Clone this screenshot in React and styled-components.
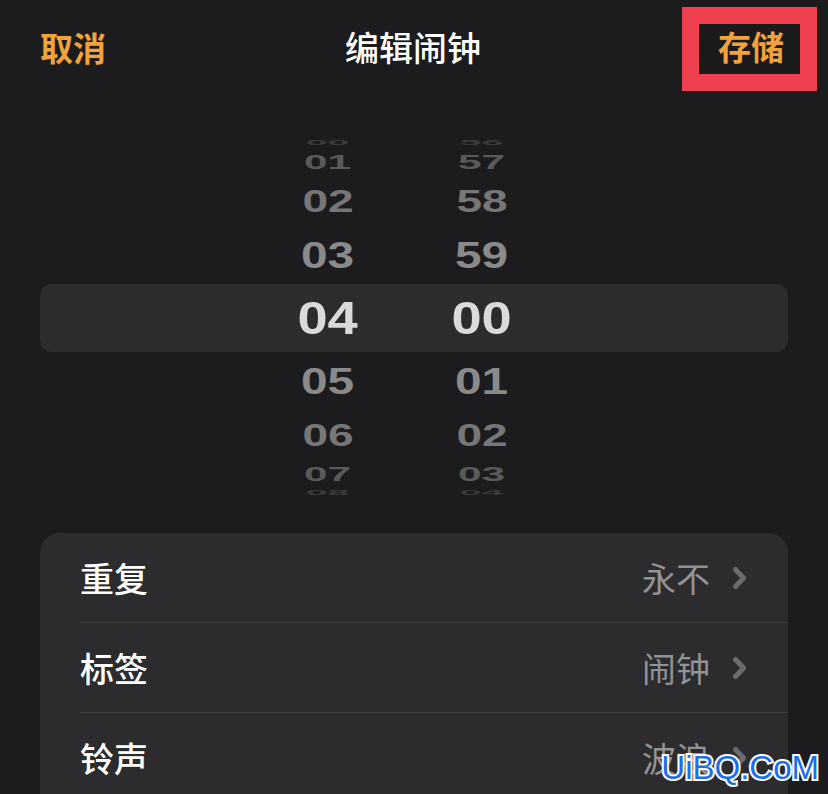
import styled, { createGlobalStyle } from "styled-components";

const GlobalStyle = createGlobalStyle`
    body {
        margin: 0;
        background: #1c1c1e;
        font-family: "Noto Sans CJK SC", "Noto Sans", sans-serif;
    }
`;

const Screen = styled.div`
    position: relative;
    height: 794px;
    overflow: hidden;
    background: #1c1c1e;
`;

const Header = styled.header`
    display: grid;
    grid-template-columns: 1fr auto 1fr;
    align-items: center;
    height: 98px;
    padding: 0 11px 0 40px;
`;

const NavText = styled.div`
    font-size: 33px;
    line-height: 40px;
    font-weight: 700;
    color: #f1a23a;
    padding-bottom: 5px;
`;

const Title = styled.h1`
    margin: 0 31px 0 0;
    font-size: 34px;
    line-height: 40px;
    font-weight: 500;
    color: #ffffff;
    padding-bottom: 5px;
`;

const SaveButton = styled.button`
    justify-self: end;
    box-sizing: border-box;
    width: 135px;
    height: 84px;
    border: 17px solid #f0404f;
    background: #1a1a1a;
    padding: 0 0 6px 3px;
    font-family: inherit;
    font-size: 33px;
    line-height: 40px;
    font-weight: 700;
    color: #f1a23a;
`;

const Picker = styled.section`
    display: grid;
    margin: 42px 40px 0;
`;

const Band = styled.div`
    grid-area: 1 / 1;
    align-self: center;
    height: 68px;
    border-radius: 12px;
    background: #2c2c2f;
`;

const Columns = styled.div`
    grid-area: 1 / 1;
    display: flex;
    gap: 54px;
    padding-left: 238px;
`;

const Wheel = styled.div`
    width: 100px;
    display: flex;
    flex-direction: column;
`;

const Slot = styled.div`
    height: ${(p) => p.$h}px;
    display: flex;
    align-items: center;
    justify-content: center;
    overflow: hidden;
`;

const Digit = styled.span`
    font-family: "Liberation Sans", Arial, sans-serif;
    font-size: 46px;
    line-height: 46px;
    font-weight: 700;
    color: ${(p) => p.$color};
    transform: scale(${(p) => p.$sx}, ${(p) => p.$sy});
`;

const Card = styled.section`
    margin: 37px 40px 0;
    border-radius: 20px;
    background: #2c2c2e;
    overflow: hidden;
`;

const Row = styled.div`
    display: flex;
    align-items: center;
    height: 89px;
    margin-left: 40px;
    padding-right: 41px;
    border-top: ${(p) => (p.$first ? "none" : "1px solid #3e3e41")};
`;

const Label = styled.span`
    flex: 1;
    font-size: 34px;
    font-weight: 500;
    color: #ffffff;
`;

const Value = styled.span`
    font-size: 34px;
    color: #929297;
    margin-right: 22px;
`;

const Watermark = styled.div`
    position: absolute;
    right: 9px;
    bottom: 10px;
    font-family: "Liberation Sans", Arial, sans-serif;
    font-size: 33px;
    line-height: 1;
    color: #1c6fe6;
    -webkit-text-stroke: 4px #ffffff;
    paint-order: stroke fill;
`;

const STEPS = [
    { h: 64, sx: 1.18, sy: 1, color: "#dadada" },
    { h: 62, sx: 1.04, sy: 0.82, color: "#8a8a8a" },
    { h: 46, sx: 1.0, sy: 0.67, color: "#777777" },
    { h: 32, sx: 0.92, sy: 0.42, color: "#5a5a5a" },
    { h: 6, sx: 0.85, sy: 0.14, color: "#3a3a3a" },
];

const hours = ["00", "01", "02", "03", "04", "05", "06", "07", "08"];
const minutes = ["56", "57", "58", "59", "00", "01", "02", "03", "04"];

function Chevron() {
    return (
        <svg width="15" height="24" viewBox="0 0 15 24">
            <path d="M3.5 3.5 L11.5 12 L3.5 20.5" fill="none" stroke="#6a6a6f" strokeWidth="5" strokeLinecap="round" strokeLinejoin="round" />
        </svg>
    );
}

function WheelColumn({ items }) {
    return (
        <Wheel>
            {items.map((n, i) => {
                const s = STEPS[Math.abs(i - 4)];
                return (
                    <Slot key={i} $h={s.h}>
                        <Digit $sx={s.sx} $sy={s.sy} $color={s.color}>{n}</Digit>
                    </Slot>
                );
            })}
        </Wheel>
    );
}

const rows = [
    { label: "重复", value: "永不" },
    { label: "标签", value: "闹钟" },
    { label: "铃声", value: "波浪" },
];

export default function App() {
    return (
        <Screen>
            <GlobalStyle />
            <Header>
                <NavText>取消</NavText>
                <Title>编辑闹钟</Title>
                <SaveButton>存储</SaveButton>
            </Header>
            <Picker>
                <Band />
                <Columns>
                    <WheelColumn items={hours} />
                    <WheelColumn items={minutes} />
                </Columns>
            </Picker>
            <Card>
                {rows.map((r, i) => (
                    <Row key={r.label} $first={i === 0}>
                        <Label>{r.label}</Label>
                        <Value>{r.value}</Value>
                        <Chevron />
                    </Row>
                ))}
                <Row />
            </Card>
            <Watermark>UiBQ.CoM</Watermark>
        </Screen>
    );
}
